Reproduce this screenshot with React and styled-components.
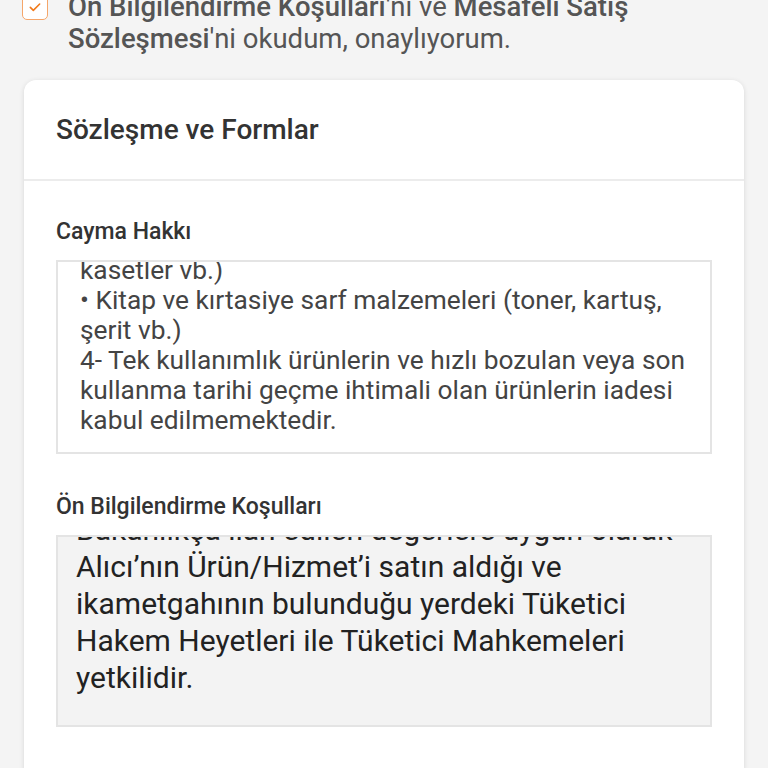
import React from "react";
import styled, { createGlobalStyle } from "styled-components";

const GlobalStyle = createGlobalStyle`
  html, body {
    margin: 0;
    padding: 0;
    background: #f4f4f4;
    font-family: Roboto, "Noto Sans", Arial, sans-serif;
    overflow: hidden;
  }
  * { box-sizing: border-box; }
`;

const Page = styled.div`
  width: 768px;
  height: 768px;
  overflow: hidden;
  background: #f4f4f4;
`;

const Agreement = styled.div`
  display: flex;
  align-items: flex-start;
  gap: 20px;
  padding: 0 16px 0 22px;
  margin-top: -9px;
`;

const CheckBox = styled.span`
  flex: 0 0 auto;
  width: 26px;
  height: 26px;
  margin-top: 3px;
  border: 1.5px solid #f5a66a;
  border-radius: 5px;
  background: #fff;
  display: flex;
  align-items: center;
  justify-content: center;
  color: #f27a1a;
`;

const AgreementText = styled.p`
  margin: 0;
  font-size: 27.5px;
  line-height: 32px;
  color: #555;
  white-space: nowrap;

  b {
    font-weight: 500;
  }
`;

const Card = styled.section`
  margin: 25px 24px 0;
  background: #fff;
  border-radius: 12px;
  box-shadow: 0 1px 5px rgba(0, 0, 0, 0.12);
  min-height: 700px;
`;

const CardHeader = styled.h2`
  margin: 0;
  height: 101px;
  display: flex;
  align-items: center;
  padding: 0 32px;
  font-size: 28px;
  font-weight: 500;
  color: #333;
  border-bottom: 2px solid #ececec;
`;

const CardBody = styled.div`
  padding: 36px 32px 0;
  display: flex;
  flex-direction: column;
`;

const SectionLabel = styled.h3`
  margin: 2px 0 15px;
  font-size: 23px;
  line-height: 26px;
  font-weight: 500;
  color: #333;
  white-space: nowrap;
`;

const TextBox = styled.div`
  height: ${(p) => p.$height}px;
  overflow: hidden;
  display: flex;
  flex-direction: column;
  justify-content: flex-end;
  border: 2px solid #e4e4e4;
  background: ${(p) => (p.$muted ? "#f3f3f3" : "#fff")};
  padding: ${(p) => p.$pad};
  margin-bottom: ${(p) => p.$gap}px;
  color: ${(p) => (p.$muted ? "#222" : "#444")};
  font-size: ${(p) => p.$size}px;
  line-height: ${(p) => p.$line}px;
`;

const Line = styled.div`
  white-space: nowrap;
`;

const cayma = [
  "• Kaset, DVD, VCD, CD, MD, videokaset, oyun",
  "kasetler vb.)",
  "• Kitap ve kırtasiye sarf malzemeleri (toner, kartuş,",
  "şerit vb.)",
  "4- Tek kullanımlık ürünlerin ve hızlı bozulan veya son",
  "kullanma tarihi geçme ihtimali olan ürünlerin iadesi",
  "kabul edilmemektedir.",
];

const onBilgi = [
  "Bakanlıkça ilan edilen değerlere uygun olarak",
  "Alıcı’nın Ürün/Hizmet’i satın aldığı ve",
  "ikametgahının bulunduğu yerdeki Tüketici",
  "Hakem Heyetleri ile Tüketici Mahkemeleri",
  "yetkilidir.",
];

const Check = () => (
  <svg width="16" height="16" viewBox="0 0 24 24" fill="none" stroke="currentColor" strokeWidth="2.4" strokeLinecap="round" strokeLinejoin="round">
    <path d="M5 12.5l4.5 4.5L19 7.5" />
  </svg>
);

export default function App() {
  return (
    <Page>
      <GlobalStyle />
      <Agreement>
        <CheckBox>
          <Check />
        </CheckBox>
        <AgreementText>
          <b>Ön Bilgilendirme Koşulları</b>'nı ve <b>Mesafeli Satış</b>
          <br />
          <b>Sözleşmesi</b>'ni okudum, onaylıyorum.
        </AgreementText>
      </Agreement>

      <Card>
        <CardHeader>Sözleşme ve Formlar</CardHeader>
        <CardBody>
          <SectionLabel>Cayma Hakkı</SectionLabel>
          <TextBox $height={194} $pad="0 22px 17px" $size={26.3} $line={30} $gap={38}>
            {cayma.map((t, i) => (
              <Line key={i}>{t}</Line>
            ))}
          </TextBox>

          <SectionLabel>Ön Bilgilendirme Koşulları</SectionLabel>
          <TextBox $muted $height={192} $pad="0 18px 29px" $size={30} $line={37} $gap={0}>
            {onBilgi.map((t, i) => (
              <Line key={i}>{t}</Line>
            ))}
          </TextBox>
        </CardBody>
      </Card>
    </Page>
  );
}
